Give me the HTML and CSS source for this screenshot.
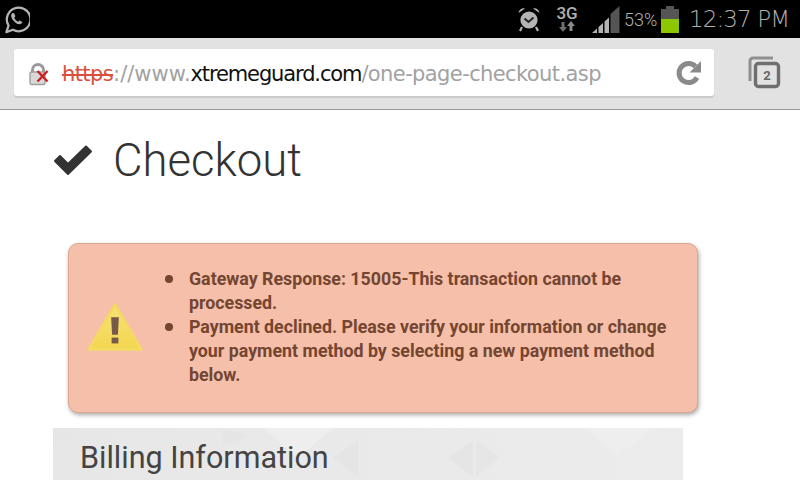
FILE: index.html
```html
<!DOCTYPE html>
<html lang="en">
  <head>
    <meta charset="UTF-8" />
    <title>Checkout</title>
    <link rel="stylesheet" href="styles.css">
  </head>
  <body>
    <div class="status-bar">
      <svg class="whatsapp" width="28" height="30" viewBox="0 0 32 34">
        <path d="M5 32 L7.5 24.5 A13.5 13.5 0 1 1 12.5 29.3 Z" fill="none" stroke="#b4b4b4" stroke-width="2.6" stroke-linejoin="round"/>
        <path d="M11.5 10.5 C10 12 10 14.5 12 17.5 C14 20.5 17.5 23 20 23 C21.5 23 23 22 23.2 20.5 L19.8 18.6 L18.4 20 C16.5 19.4 14.8 17.4 14 15.2 L15.4 13.8 L13.6 10.2 Z" fill="#b4b4b4"/>
      </svg>
      <div class="status-right">
        <svg class="alarm" width="24" height="26" viewBox="0 0 24 26">
          <circle cx="12" cy="14" r="8.6" fill="#b4b4b4"/>
          <path d="M1.5 7 A5 5 0 0 1 8 2.5 Z M22.5 7 A5 5 0 0 0 16 2.5 Z" fill="#b4b4b4"/>
          <path d="M5 21 L3 25 M19 21 L21 25" stroke="#b4b4b4" stroke-width="2.2"/>
          <path d="M7.5 12.5 L11.5 16 L16.5 11.5" fill="none" stroke="#222" stroke-width="2"/>
        </svg>
        <div class="network">
          <span class="network-label">3G</span>
          <svg width="18" height="11" viewBox="0 0 18 11">
            <path d="M3.5 1 H6.5 V6 H9 L5 11 L1 6 H3.5 Z" fill="#6f6f6f"/>
            <path d="M11.5 10 H14.5 V5 H17 L13 0 L9 5 H11.5 Z" fill="#8c8c8c"/>
          </svg>
        </div>
        <svg class="signal" width="28" height="28" viewBox="0 0 28 28">
          <path d="M0 28 L5 23.5 V28 Z" fill="#b4b4b4"/>
          <path d="M6.5 28 V22 L11 18 V28 Z" fill="#b4b4b4"/>
          <path d="M12.5 28 V16.5 L17 12.5 V28 Z" fill="#b4b4b4"/>
          <path d="M18.5 28 V9 L27.5 1 V28 Z" fill="#555"/>
        </svg>
        <span class="battery-pct">53%</span>
        <div class="battery">
          <div class="battery-cap"></div>
          <div class="battery-body"><div class="battery-fill"></div></div>
        </div>
        <span class="clock">12:37 PM</span>
      </div>
    </div>

    <div class="toolbar">
      <div class="url-box">
        <svg class="lock" width="20" height="24" viewBox="0 0 20 24">
          <path d="M3.5 11 V8 A5.5 5.5 0 0 1 14.5 8 V11" fill="none" stroke="#9a9a9a" stroke-width="3"/>
          <rect x="1" y="10" width="15" height="12.5" rx="1.5" fill="#d8d8d8" stroke="#a0a0a0" stroke-width="1.4"/>
          <path d="M8.5 9 L18.5 19.5 M18.5 9 L8.5 19.5" stroke="#cf1f22" stroke-width="2.4"/>
        </svg>
        <div class="url"><span class="url-scheme">https</span><span class="url-sep">://www.</span><span class="url-host">xtremeguard.com</span><span class="url-path">/one-page-checkout.asp</span></div>
        <svg class="reload" width="28" height="28" viewBox="0 0 28 28">
          <path d="M22 18.5 A9.5 9.5 0 1 1 20.5 7.5" fill="none" stroke="#8a8a8a" stroke-width="5"/>
          <path d="M26 2 V13.5 H14.5 Z" fill="#8a8a8a"/>
        </svg>
      </div>
      <svg class="tabs" width="34" height="34" viewBox="0 0 34 34">
        <path d="M3 26 V6 A3 3 0 0 1 6 3 H26" fill="none" stroke="#8f8f8f" stroke-width="3"/>
        <rect x="8.5" y="8.5" width="23" height="23" rx="3" fill="none" stroke="#6f6f6f" stroke-width="3.4"/>
        <text x="20" y="24.5" class="tabs-count">2</text>
      </svg>
    </div>

    <main class="page">
      <h1 class="title">
        <svg class="check" width="40" height="32" viewBox="0 0 40 32">
          <path d="M2 17 L7 12 L15 20 L33 2.5 L38 7.5 L15 30 Z" fill="#333" stroke="#333" stroke-width="2" stroke-linejoin="round"/>
        </svg>
        Checkout
      </h1>

      <div class="alert">
        <svg class="warn" width="56" height="50" viewBox="0 0 58 50">
          <defs>
            <linearGradient id="warn-fill" x1="0" y1="0" x2="0" y2="1">
              <stop offset="0" stop-color="#f7e27a"/>
              <stop offset="1" stop-color="#f3d64f"/>
            </linearGradient>
          </defs>
          <path d="M29 2 L56 48 H2 Z" fill="url(#warn-fill)" stroke="#f4da60" stroke-width="3" stroke-linejoin="round"/>
          <path d="M25 15 H33 L32 33 H26 Z" fill="#75594a"/>
          <rect x="25.5" y="36" width="7" height="6" fill="#75594a"/>
        </svg>
        <ul class="alert-list">
          <li>Gateway Response: 15005-This transaction cannot be processed.</li>
          <li>Payment declined. Please verify your information or change your payment method by selecting a new payment method below.</li>
        </ul>
      </div>

      <section class="billing">
        <svg class="billing-bg" width="630" height="52" viewBox="0 0 630 52">
          <path d="M170 0 L197 8 L170 17 Z M305 12 V49 L280 30 Z M420 12 V49 L395 30 Z" fill="#e5e5e5"/>
          <path d="M423 12 V49 L447 30 Z M0 0 H30 L0 20 Z" fill="#e6e6e6"/>
          <path d="M530 0 H600 L565 28 Z M210 0 H280 L245 30 Z" fill="#eeeeee"/>
        </svg>
        <h2 class="billing-title">Billing Information</h2>
      </section>
    </main>
  </body>
</html>
```

FILE: styles.css
```css
* {
  margin: 0;
  padding: 0;
  box-sizing: border-box;
}

html,
body {
  width: 800px;
  height: 480px;
  overflow: hidden;
}

body {
  background-color: #fff;
  font-family: "Roboto", sans-serif;
}

.status-bar {
  display: flex;
  justify-content: space-between;
  align-items: center;
  height: 38px;
  padding: 0 12px 0 2px;
  background-color: #000;
  color: #b0b0b0;
}

.status-right {
  display: flex;
  align-items: center;
}

.alarm {
  margin-right: 15px;
}

.network {
  display: flex;
  flex-direction: column;
  align-items: center;
  width: 22px;
  margin-right: 14px;
}

.network-label {
  font-size: 17px;
  line-height: 15px;
  font-weight: 500;
}

.signal {
  margin-right: 4px;
}

.battery-pct {
  width: 32px;
  font-size: 18px;
  font-weight: 300;
  white-space: nowrap;
  margin-right: 5px;
}

.battery {
  width: 18px;
  margin-right: 10px;
}

.battery-cap {
  width: 8px;
  height: 3px;
  margin: 0 auto;
  background-color: #555;
}

.battery-body {
  display: flex;
  align-items: flex-end;
  height: 24px;
  background-color: #555;
}

.battery-fill {
  width: 100%;
  height: 14px;
  background-color: #8cc700;
}

.clock {
  width: 99px;
  font-family: "DejaVu Sans", sans-serif;
  font-weight: 200;
  font-size: 23px;
  letter-spacing: -0.9px;
  white-space: nowrap;
}

.toolbar {
  display: flex;
  align-items: center;
  height: 72px;
  padding: 0 19px 3px 14px;
  background-color: #e2e2e2;
  border-bottom: 1px solid #999;
}

.url-box {
  display: flex;
  align-items: center;
  width: 700px;
  height: 47px;
  padding: 0 11px 0 15px;
  background-color: #fff;
  border-radius: 3px;
  box-shadow: 0 2px 1px rgba(0, 0, 0, 0.1);
}

.lock {
  margin: 3px 13px 0 0;
}

.url {
  flex: 1;
  padding-top: 3px;
  font-family: "DejaVu Sans", sans-serif;
  font-size: 21px;
  white-space: nowrap;
}

.url-scheme {
  color: #d9503f;
  text-decoration: line-through;
  letter-spacing: -0.6px;
}

.url-sep,
.url-path {
  color: #a2a2a2;
}

.url-path {
  letter-spacing: -0.6px;
}

.url-host {
  color: #111;
  letter-spacing: -1.13px;
}

.reload {
  margin-top: 1px;
}

.tabs {
  margin-left: 33px;
}

.tabs-count {
  font-family: "Roboto", sans-serif;
  font-size: 13px;
  font-weight: 700;
  fill: #666;
  text-anchor: middle;
}

.page {
  padding: 0 117px 0 53px;
}

.title {
  display: flex;
  align-items: center;
  gap: 20px;
  height: 100px;
  font-size: 45.5px;
  font-weight: 300;
  color: #333;
}

.alert {
  display: flex;
  align-items: center;
  width: 630px;
  height: 170px;
  margin: 33px 0 15px 15px;
  padding: 0 30px 2px 18px;
  background-color: #f5bfa9;
  border: 1px solid #dfa78f;
  border-radius: 10px;
  box-shadow: 1px 2px 4px rgba(0, 0, 0, 0.35);
}

.warn {
  flex: none;
  margin-right: 46px;
}

.alert-list {
  list-style: none;
  color: #744531;
  font-size: 17.8px;
  line-height: 24px;
  font-weight: 700;
}

.alert-list li {
  position: relative;
}

.alert-list li::before {
  content: "";
  position: absolute;
  left: -24px;
  top: 8px;
  width: 8px;
  height: 8px;
  border-radius: 50%;
  background-color: #744531;
}

.billing {
  position: relative;
  width: 630px;
  height: 52px;
  background: linear-gradient(to right, #e7e7e7, #ececec);
  overflow: hidden;
}

.billing-bg {
  position: absolute;
  top: 0;
  left: 0;
}

.billing-title {
  position: relative;
  padding: 10px 0 0 27px;
  font-size: 30.5px;
  line-height: 40px;
  font-weight: 400;
  color: #444;
}
```
